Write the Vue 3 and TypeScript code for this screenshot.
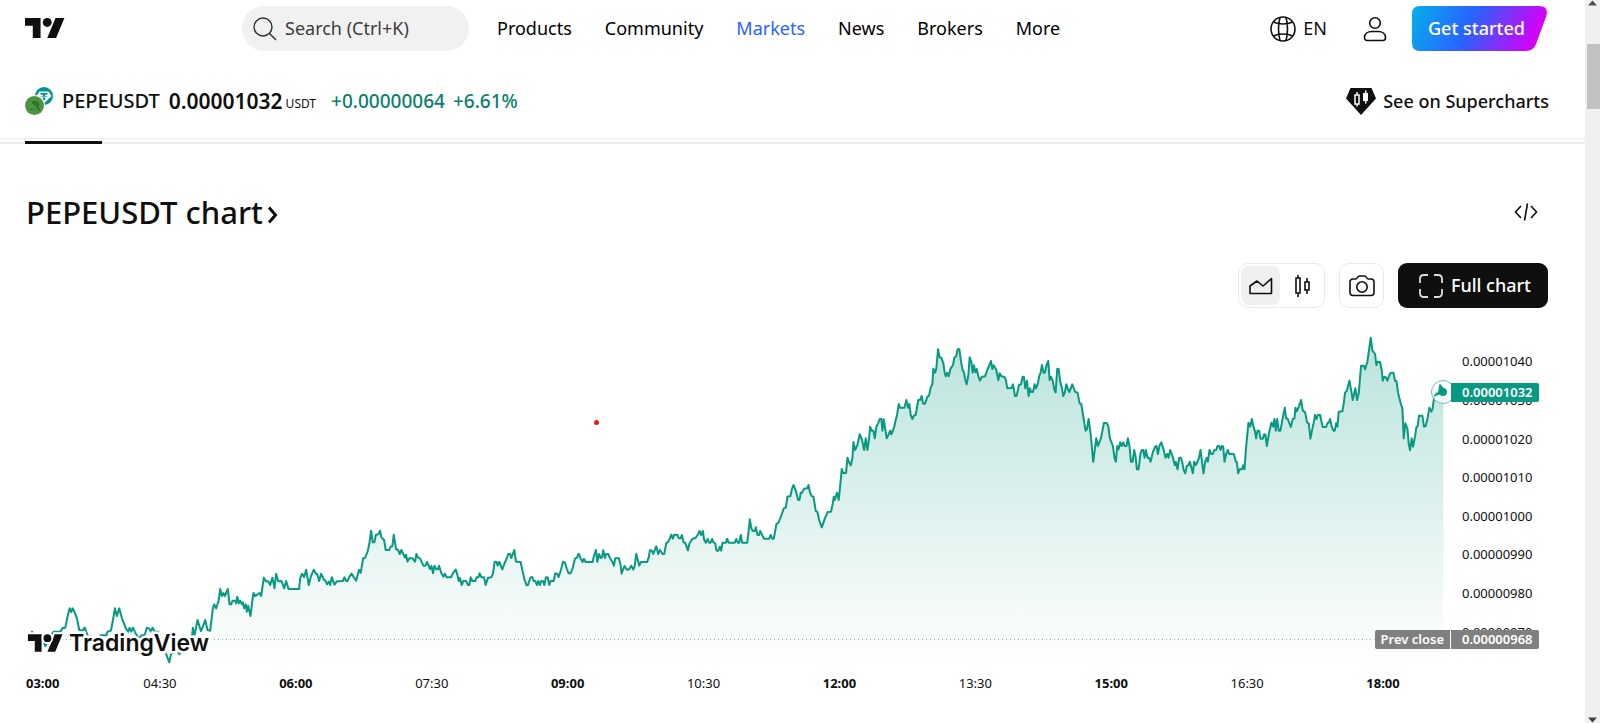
<script setup lang="ts">
import { computed, ref } from 'vue'

interface TraceSection {
  left: number
  top: number
  points: string
}

const navItems: { label: string; active?: boolean }[] = [
  { label: 'Products' },
  { label: 'Community' },
  { label: 'Markets', active: true },
  { label: 'News' },
  { label: 'Brokers' },
  { label: 'More' },
]

const priceLabels: string[] = [
  '0.00001040',
  '0.00001030',
  '0.00001020',
  '0.00001010',
  '0.00001000',
  '0.00000990',
  '0.00000980',
  '0.00000970',
]

const timeLabels: string[] = [
  '03:00', '04:30', '06:00', '07:30', '09:00', '10:30',
  '12:00', '13:30', '15:00', '16:30', '18:00',
]

const chartType = ref<'area' | 'candles'>('area')

/* Price line, split into sections that each count from their own origin. */
const sections: TraceSection[] = [
  {
    left: 0,
    top: 1440,
    points:
      '78,466 88,478 95,455 100,466 110,490 125,478 135,498 145,478 160,455 180,455 188,443 195,443 202,408 208,385 213,396 217,385 223,397 230,415 237,450 247,452 253,443 262,466 270,478 290,498 300,466 318,466 322,455 332,452 338,420 344,385 350,408 357,385 365,415 378,448 384,455 388,443 393,455 398,443 405,458 415,475 425,466 433,466 440,443 447,446 452,455 457,443 463,455 475,455 485,490 497,520 507,547 513,520 530,515 538,523 545,500 560,490 575,475 578,443 583,466 592,420 602,453 608,440 615,420 622,450 630,452 638,385 642,373 648,385 655,362 660,327 665,348 670,339 674,348 683,327 688,373 693,373 697,362 705,362 708,370 711,350 716,370 720,362 725,373 728,367 732,385 737,373 740,395 744,378 751,408 758,350 760,339 764,348 770,345 778,339 783,348 787,320 791,293 797,304 804,304 810,315 817,293 823,325 828,281 834,304 844,303 852,325 858,303 865,327 897,327 900,295 906,281 912,291 918,269 926,315 932,290 941,269 948,282 951,282 957,303 963,281 972,300 976,302 981,313 986,305 990,315 995,292 1003,314 1010,304 1028,303 1033,292 1038,303 1042,303 1047,292 1054,281 1068,302 1077,269 1082,278 1089,235 1095,234 1103,213 1108,190 1113,152 1118,187 1123,187 1127,165',
  },
  {
    left: 1050,
    top: 1440,
    points:
      '85,163 90,152 94,172 102,180 107,210 117,210 122,200 127,198 131,164 138,207 144,210 149,222 154,210 165,233 168,224 172,245 178,235 187,235 195,245 199,222 204,233 210,235 220,257 226,257 231,246 240,267 244,258 249,280 253,257 259,268 264,268 267,257 274,280 280,290 284,281 290,292 303,292 308,281 317,269 321,280 326,303 330,294 335,315 340,303 348,303 354,315 358,315 362,292 367,303 376,303 380,292 385,292 389,280 394,292 402,292 407,315 414,293 424,292 429,280 434,245 440,246 443,257 448,246 457,268 463,252 470,235 475,222 480,222 484,234 489,220 493,210 498,245 512,246 518,275 524,300 530,316 534,315 541,293 547,291 551,303 556,303 561,315 565,303 570,315 574,303 579,303 583,315 588,292 593,292 598,315 602,303 611,303 616,280 622,282 626,291 633,270 639,245 645,248 650,265 656,280 662,280 668,265 675,236 681,233 686,221 691,233 698,246 702,236 707,246 728,246 732,228 738,210 742,245 747,222 752,234 756,232 760,211 765,234 769,222 775,222 780,234 787,245 792,257 796,235 807,235 812,255 815,281 820,267 824,258 831,269 838,268 844,257 850,269 854,260 859,222 868,257 873,246 892,246 897,230 900,211 906,212 910,222 914,212 919,199 925,222 930,210 938,222 943,222 949,190 955,185 960,175 964,164 969,176 973,164 982,164 987,175 992,175 996,165 1001,187 1006,188 1014,211 1019,190 1028,176 1037,174 1044,164 1049,153',
  },
  {
    left: 2100,
    top: 1200,
    points:
      '4,405 9,393 13,420 18,428 23,417 28,428 32,428 37,417 41,428 46,430 50,452 55,452 60,440 64,452 68,428 78,428 82,416 86,428 105,428 109,417 114,428 118,428 123,405 127,428 142,428 145,405 150,358 155,387 160,393 165,393 168,382 173,405 178,405 181,393 187,405 193,416 208,416 213,405 217,416 222,416 230,372 236,368 244,348 252,325 258,323 263,290 272,288 276,268 281,255 288,272 295,300 299,300 303,278 307,278 313,266 322,265 326,255 331,278 336,289 341,290 348,333 353,336 358,360 366,382 375,356 384,336 394,335 399,310 402,290 405,300 408,290 412,278 417,300 422,250 426,207 430,219 439,219 443,173 448,187 453,196 458,175 461,126 466,150 473,135 480,103 487,120 493,150 498,115 503,150 508,115 511,80 516,92 521,92 525,115 530,80 535,70 540,57 545,57 548,92 552,58 557,90 561,115 567,103 571,92 575,103 583,82 588,60 592,45 597,12 601,23 614,23 620,0 625,23 629,12 633,45 638,57 643,46 648,45',
  },
  {
    left: 2700,
    top: 990,
    points:
      '53,225 56,210 61,210 66,198 70,221 76,221 83,200 88,197 93,173 98,162 101,116 106,128 110,115 115,58 120,82 125,83 131,100 135,128 138,139 142,128 147,139 153,115 160,105 164,83 169,80 174,58 179,58 184,95 189,120 193,128 197,150 201,163 206,135 210,82 215,95 219,128 223,106 227,127 231,117 236,138 241,152 246,141 256,139 264,117 270,103 274,93 278,117 282,106 290,120 296,151 300,130 305,139 315,141 319,152 323,175 336,174 340,163 346,198 351,197 358,165 364,163 369,140 373,141 377,175 382,152 387,198 391,175 395,186 400,186 405,163 409,175 414,163 419,138 423,128 427,105 432,128 436,128 441,104 446,93 450,150 454,140 459,152 464,178 468,187 473,116 477,117 482,155 487,175 491,198 496,186 500,163 504,175 509,186 514,174 518,163 527,186 534,188 540,220 545,222 552,265 558,302 562,298 567,267 573,310 581,396 586,355 590,325 595,348 604,325 608,305 613,279 621,279 626,288 631,325 640,348 645,385 649,395 653,348 657,358 662,337 666,348 671,337 675,348 681,348 685,325 690,350 694,395 699,395 704,360 708,380 712,418 717,418 723,370 727,360 731,360 735,383 739,360 744,383 748,383 753,395 760,366 767,350 771,348 775,372 780,347 785,337 792,358 798,383 803,372 807,383 812,360 820,382 826,406 829,396 834,418 839,383 844,383 848,395 852,418 857,430 862,407 867,406 871,395 880,430 884,395',
  },
  {
    left: 3300,
    top: 1140,
    points:
      '289,255 298,235 303,210 312,280 317,245 322,233 325,245 330,210 335,222 340,222 344,211 350,210 354,198 359,198 363,210 367,198 371,200 375,245 380,222 385,210 389,222 403,222 409,245 412,246 416,280 420,268 428,268 431,256 435,268 440,200 447,128 452,140 457,117 462,140 466,152 470,175 474,152 479,152 483,176 490,176 494,163 498,164 502,198 508,163 512,145 516,128 521,140 525,117 529,152 533,117 538,152 543,152 549,118 556,83 560,115 565,117 574,141 580,117 585,115 588,83 592,94 598,80 605,60 610,92 617,97 623,128 628,130 633,176 640,140 643,128 647,105 651,117 655,105 662,105 667,128 670,141 680,141 685,128 688,128 692,117 697,140 702,152 706,152 710,130 714,140 718,95 729,94 733,70',
  },
  {
    left: 3900,
    top: 960,
    points:
      '137,218 142,213 150,182 156,215 160,240 168,205 173,240 178,220 185,137 193,137 197,148 204,125 209,90 214,53 219,92 227,102 231,135 235,125 242,126 247,150 250,182 255,170 260,172 264,182 270,165 275,158 282,158 287,182 291,183 296,218 304,250 309,265 313,355 318,310 324,325 328,370 332,391 337,355 341,380 347,350 351,322 355,318 359,287 369,287 374,320 379,318 385,293 390,263 396,275 400,265 405,225 412,218 416,225 422,195 428,210 432,215',
  },
]

const linePoints = computed<string>(() =>
  sections
    .map((s) =>
      s.points
        .split(' ')
        .map((pair) => {
          const [x, y] = pair.split(',').map(Number)
          return `${x + s.left},${y + s.top}`
        })
        .join(' '),
    )
    .join(' '),
)

const areaPoints = computed<string>(() => `78,1985 ${linePoints.value} 4332,1985`)
</script>

<template>
  <div class="page">
    <div class="content">
      <header class="topbar">
        <a class="logo" href="#" aria-label="TradingView home">
          <svg width="40" height="20" viewBox="0 4 36 18">
            <path d="M14 22H7V11H0V4h14v18zM28 22h-8l7.500-18h8L28 22z" fill="#0f0f0f" />
            <circle cx="20" cy="8" r="4" fill="#0f0f0f" />
          </svg>
        </a>
        <button class="search" type="button">
          <svg width="24" height="24" viewBox="0 0 24 24" fill="none" stroke="#2e2e2e" stroke-width="1.4">
            <circle cx="10" cy="10" r="9" />
            <path d="M16.5 16.5 23 23" />
          </svg>
          <span>Search (Ctrl+K)</span>
        </button>
        <nav class="nav">
          <a v-for="item in navItems" :key="item.label" href="#" :class="{ active: item.active }">{{ item.label }}</a>
        </nav>
        <button class="lang" type="button">
          <svg width="26" height="26" viewBox="0 0 26 26" fill="none" stroke="#0f0f0f" stroke-width="1.600">
            <circle cx="13" cy="13" r="12" />
            <path d="M10 1.500C8 8 8 18 10 24.500M16 1.500c2 6.500 2 16.500 0 23M3.500 6c5 2.700 14 2.700 19 0M3.500 20c5-2.700 14-2.700 19 0" />
          </svg>
          <span>EN</span>
        </button>
        <button class="user" type="button" aria-label="Open user menu">
          <svg width="24" height="26" viewBox="0 0 24 26" fill="none" stroke="#0f0f0f" stroke-width="1.600">
            <circle cx="12" cy="7" r="5.300" />
            <path d="M9 15.500h6c4.500 0 7.500 2.500 7.500 6 0 2-1 3-2.700 3H4.200c-1.700 0-2.700-1-2.700-3 0-3.500 3-6 7.500-6z" />
          </svg>
        </button>
        <button class="cta" type="button">
          <svg viewBox="0 0 135 45" preserveAspectRatio="none" aria-hidden="true">
            <defs>
              <linearGradient id="cta-fill" x1="0" y1="0" x2="1" y2="0.150">
                <stop offset="0" stop-color="#05b0ea" />
                <stop offset="0.480" stop-color="#2962ff" />
                <stop offset="1" stop-color="#d500f9" />
              </linearGradient>
            </defs>
            <path d="M8 0H127Q137 0 134.300 10L124 38Q121.500 45 114 45H8Q0 45 0 37V8Q0 0 8 0Z" fill="url(#cta-fill)" />
          </svg>
          <span>Get started</span>
        </button>
      </header>

      <section class="symbol">
        <svg class="pair" width="28" height="28" viewBox="0 0 28 28">
          <circle cx="19" cy="9" r="9" fill="#009393" />
          <path d="M14.500 4.500h9l3 4.500-7.500 7.500L11.500 9z" fill="#fff" />
          <path d="M15.500 6h7v1.800h-2.500v1.500h-2V7.800h-2.500zM14.500 9.500q4.500 2 9 0M18 10h2v3h-2z" fill="#009393" />
          <circle cx="9.500" cy="18.500" r="10.500" fill="#fff" />
          <circle cx="9.500" cy="18.500" r="9.500" fill="#4c9540" />
          <path d="M7 15.500q2-2 3.500-.500 2-1 3 1.500v2.500H11zM5.500 22.500h3M11 20l3 1v3" fill="#3c7a33" stroke="#2f5f27" />
        </svg>
        <span class="ticker">PEPEUSDT</span>
        <span class="price">0.00001032</span>
        <span class="unit">USDT</span>
        <span class="change">+0.00000064</span>
        <span class="change percent">+6.61%</span>
        <a class="super" href="#">
          <svg width="30" height="27" viewBox="0 0 30 27">
            <path d="M4.500 0h21L30 10.500 15 27 0 10.500z" fill="#0f0f0f" />
            <path d="M9 7h4v9H9zM11 4v3M11 16v2.500" fill="none" stroke="#fff" stroke-width="1.500" />
            <path d="M17 5h5v8h-5zM19 2.500h1.500v13H19z" fill="#fff" />
          </svg>
          <span>See on Supercharts</span>
        </a>
      </section>

      <div class="tabline"><span></span></div>

      <main>
        <div class="title">
          <h1>
            <a href="#">PEPEUSDT chart<svg width="11" height="18" viewBox="0 0 11 18" fill="none" stroke="#0f0f0f" stroke-width="3"><path d="M2 1.500 8.500 9 2 16.500" /></svg></a>
          </h1>
          <button class="embed" type="button" aria-label="Get widget">
            <svg width="24" height="18" viewBox="0 0 24 18" fill="none" stroke="#0f0f0f" stroke-width="1.600">
              <path d="M7 3 1.500 9 7 15M17 3l5.500 6L17 15M13.500.500l-3 17" />
            </svg>
          </button>
        </div>

        <div class="toolbar">
          <div class="types">
            <button type="button" :class="{ on: chartType === 'area' }" aria-label="Area chart" @click="chartType = 'area'">
              <svg width="24" height="18" viewBox="0 0 24 18" fill="none" stroke="#0f0f0f" stroke-width="1.600" stroke-linejoin="round">
                <path d="M1 9 8 4l6 5 8.500-7.500v15H1z" />
              </svg>
            </button>
            <button type="button" :class="{ on: chartType === 'candles' }" aria-label="Candles" @click="chartType = 'candles'">
              <svg width="18" height="24" viewBox="0 0 18 24" fill="none" stroke="#0f0f0f" stroke-width="1.600">
                <path d="M2 4h4v15H2zM4 1v3M4 19v4M11 8h4v8h-4zM13 4v4M13 16v4" />
              </svg>
            </button>
          </div>
          <button class="snap" type="button" aria-label="Take a snapshot">
            <svg width="26" height="22" viewBox="0 0 26 22" fill="none" stroke="#0f0f0f" stroke-width="1.600">
              <path d="M4 4h2.500c1 0 1.500-.500 2-1.500S9.500 1 10.500 1h5c1 0 1.500.500 2 1.500S18.500 4 19.500 4H22c2 0 3 1 3 3v10.500c0 2-1 3-3 3H4c-2 0-3-1-3-3V7c0-2 1-3 3-3z" />
              <circle cx="13" cy="12" r="5.200" />
            </svg>
          </button>
          <button class="full" type="button">
            <svg width="24" height="24" viewBox="0 0 24 24" fill="none" stroke="#dcdcdc" stroke-width="1.800">
              <path d="M1 9V5q0-4 4-4h4M15 1h4q4 0 4 4v4M23 15v4q0 4-4 4h-4M9 23H5q-4 0-4-4v-4" />
            </svg>
            <span>Full chart</span>
          </button>
        </div>

        <div class="chart">
          <div class="plot">
            <svg class="trace" viewBox="77 960 4278 1035" preserveAspectRatio="none" role="img" aria-label="PEPEUSDT price">
              <defs>
                <linearGradient id="area-fill" gradientUnits="userSpaceOnUse" x1="0" y1="1010" x2="0" y2="1985">
                  <stop offset="0" stop-color="#089981" stop-opacity="0.280" />
                  <stop offset="1" stop-color="#089981" stop-opacity="0" />
                </linearGradient>
              </defs>
              <polygon :points="areaPoints" fill="url(#area-fill)" />
              <path class="prev" d="M77 1918H4125" />
              <polyline class="line" :points="linePoints" />
            </svg>
            <svg class="marker" width="26" height="26" viewBox="0 0 26 26">
              <circle cx="13" cy="13" r="11.500" fill="#fff" fill-opacity="0.750" stroke="#089981" stroke-opacity="0.600" />
              <path d="M4 17 7 14l1.500 0L10 5.500 14 10v6l-5-1z" fill="#089981" stroke="#089981" />
              <circle cx="13" cy="13" r="4" fill="#089981" />
            </svg>
            <i class="dot"></i>
            <div class="watermark">
              <svg width="38" height="22" viewBox="-2 2 39 22">
                <g fill="#0f0f0f" stroke="#fff" stroke-width="4" paint-order="stroke">
                  <path d="M14 22H7V11H0V4h14v18zM28 22h-8l7.500-18h8L28 22z" />
                  <circle cx="20" cy="8" r="4" />
                </g>
              </svg>
              <span>TradingView</span>
            </div>
            <span class="prev-name">Prev close</span>
          </div>
          <div class="prices">
            <span v-for="p in priceLabels" :key="p">{{ p }}</span>
            <strong class="badge last">0.00001032</strong>
            <strong class="badge close">0.00000968</strong>
          </div>
        </div>
        <div class="times">
          <span v-for="(t, i) in timeLabels" :key="t" :class="{ major: i % 2 === 0 }">{{ t }}</span>
        </div>
      </main>
    </div>

    <div class="scrollbar" aria-hidden="true">
      <svg width="9" height="6" viewBox="0 0 9 6"><path d="M0 5.500 4.500.500 9 5.500z" fill="#505050" /></svg>
      <div class="thumb"></div>
      <svg width="9" height="6" viewBox="0 0 9 6"><path d="M0 .500 4.500 5.500 9 .500z" fill="#404040" /></svg>
    </div>
  </div>
</template>

<style>
body {
  background: #fff;
}
</style>

<style scoped>
.page {
  display: flex;
  min-height: 100vh;
  font-family: "Trebuchet MS", "Noto Sans", "Open Sans", sans-serif;
  font-size: 18px;
  line-height: 24px;
  color: #0f0f0f;
}
.content {
  flex: 1;
  min-width: 0;
}
button {
  margin: 0;
  padding: 0;
  border: 0;
  background: none;
  font: inherit;
  color: inherit;
  cursor: pointer;
}
a {
  color: inherit;
  text-decoration: none;
}
svg {
  display: block;
  flex: none;
}
.topbar {
  display: flex;
  align-items: center;
  height: 45px;
  padding: 6px 38px 6px 25px;
}
.logo {
  width: 217px;
  padding-bottom: 2px;
}
.topbar span,
.nav a,
.full span {
  padding-bottom: 2px;
}
.search {
  display: flex;
  align-items: center;
  gap: 8px;
  width: 227px;
  height: 45px;
  padding-left: 11px;
  border-radius: 23px;
  background: #f1f1f1;
  color: #3c3c3c;
}
.nav {
  display: flex;
  gap: 33px;
  margin-left: 28px;
  color: #000;
}
.nav .active {
  color: #2962ff;
}
.lang {
  display: flex;
  align-items: center;
  gap: 7px;
  margin-left: auto;
}
.user {
  margin: 0 25px 0 36px;
}
.cta {
  position: relative;
  display: grid;
  place-items: center;
  width: 135px;
  height: 45px;
  padding-right: 6px;
  color: #fff;
  font-weight: 500;
}
.cta svg {
  position: absolute;
  inset: 0;
  width: 100%;
  height: 100%;
}
.cta span {
  position: relative;
}
.symbol {
  display: flex;
  align-items: center;
  height: 74px;
  padding: 7px 36px 0 25px;
  border-bottom: 1px solid #e9e9e9;
  font-weight: 500;
}
.ticker {
  margin-left: 9px;
  font-size: 20px;
}
.price {
  margin-left: 9px;
  font-size: 21px;
  font-weight: 600;
}
.unit {
  margin: 5px 0 0 3px;
  font-size: 12px;
  font-weight: 400;
}
.change {
  margin-left: 15px;
  color: #0b7f6b;
  font-size: 19px;
}
.percent {
  margin-left: 8px;
}
.super {
  display: flex;
  align-items: center;
  gap: 7px;
  margin-left: auto;
}
.tabline {
  height: 4px;
  margin-top: 2px;
  padding-left: 25px;
  background: linear-gradient(#ececec, #ececec) 0 1px / 100% 2px no-repeat;
}
.tabline span {
  display: block;
  width: 77px;
  height: 3px;
  background: #0f0f0f;
}
main {
  padding: 0 37px 0 26px;
}
.title {
  display: flex;
  align-items: center;
  justify-content: space-between;
  margin-top: 47px;
  padding-right: 10px;
}
h1 {
  margin: 0;
  font-size: 31px;
  line-height: 40px;
  font-weight: 500;
}
h1 a {
  display: flex;
  align-items: center;
  gap: 4px;
}
h1 svg {
  margin-top: 6px;
}
.toolbar {
  display: flex;
  justify-content: flex-end;
  gap: 14px;
  margin-top: 31px;
}
.types,
.snap {
  box-sizing: border-box;
  height: 45px;
  border: 1px solid #ebebeb;
  border-radius: 10px;
}
.types {
  display: flex;
  gap: 3px;
  padding: 2px;
}
.types button {
  display: grid;
  place-items: center;
  width: 39px;
  border-radius: 8px;
}
.types .on {
  background: #f0f0f0;
}
.snap {
  display: grid;
  place-items: center;
  width: 45px;
}
.full {
  display: flex;
  align-items: center;
  justify-content: flex-end;
  gap: 8px;
  width: 150px;
  padding-right: 17px;
  border-radius: 9px;
  background: #0f0f0f;
  color: #fff;
  font-weight: 500;
}
.chart {
  display: flex;
  height: 345px;
  margin-top: 12px;
}
.plot {
  position: relative;
  flex: 1;
}
.trace {
  width: 100%;
  height: 100%;
}
.line,
.prev {
  fill: none;
  vector-effect: non-scaling-stroke;
}
.line {
  stroke: #089981;
  stroke-width: 2px;
  stroke-linejoin: round;
}
.prev {
  stroke: #999;
  stroke-width: 1px;
  stroke-dasharray: 1 3;
}
.marker {
  position: absolute;
  top: 59px;
  right: -5px;
}
.dot {
  position: absolute;
  left: 40%;
  top: 100px;
  width: 5px;
  height: 5px;
  margin-left: -2px;
  border-radius: 50%;
  background: #f01818;
}
.watermark {
  position: absolute;
  left: 0;
  bottom: 10px;
  display: flex;
  align-items: center;
  gap: 5px;
  font-family: Inter, sans-serif;
  font-size: 23px;
  line-height: 24px;
  font-weight: 600;
}
.watermark span {
  -webkit-text-stroke: 5px #fff;
  paint-order: stroke fill;
}
.prev-name,
.badge {
  position: absolute;
  height: 19px;
  background: #808080;
  color: #fff;
  font-size: 13px;
  line-height: 19px;
  font-weight: 600;
}
.prev-name {
  right: 1px;
  top: 310px;
  padding: 0 6px;
  border-radius: 2px 0 0 2px;
}
.prices {
  position: relative;
  display: grid;
  grid-template-rows: repeat(8, 1fr);
  align-items: center;
  box-sizing: border-box;
  width: 97px;
  padding: 22px 0 14px 11px;
  font-size: 13px;
  line-height: 18px;
}
.badge {
  left: 0;
  width: 77px;
  padding-left: 11px;
  border-radius: 0 2px 2px 0;
}
.last {
  top: 63px;
  background: #089981;
}
.close {
  top: 310px;
}
.times {
  display: grid;
  grid-template-columns: 66px repeat(10, 1fr);
  margin: 9px 97px 0 0;
  font-size: 13px;
  line-height: 18px;
  text-align: center;
}
.times span:first-child {
  text-align: left;
}
.major {
  font-weight: 700;
}
.scrollbar {
  display: flex;
  flex-direction: column;
  align-items: center;
  width: 15px;
  background: #f0f0f0;
}
.scrollbar svg:last-child {
  margin-top: auto;
}
.thumb {
  width: 13px;
  height: 65px;
  margin: 38px 0 0 2px;
  background: #c1c1c1;
}
</style>
